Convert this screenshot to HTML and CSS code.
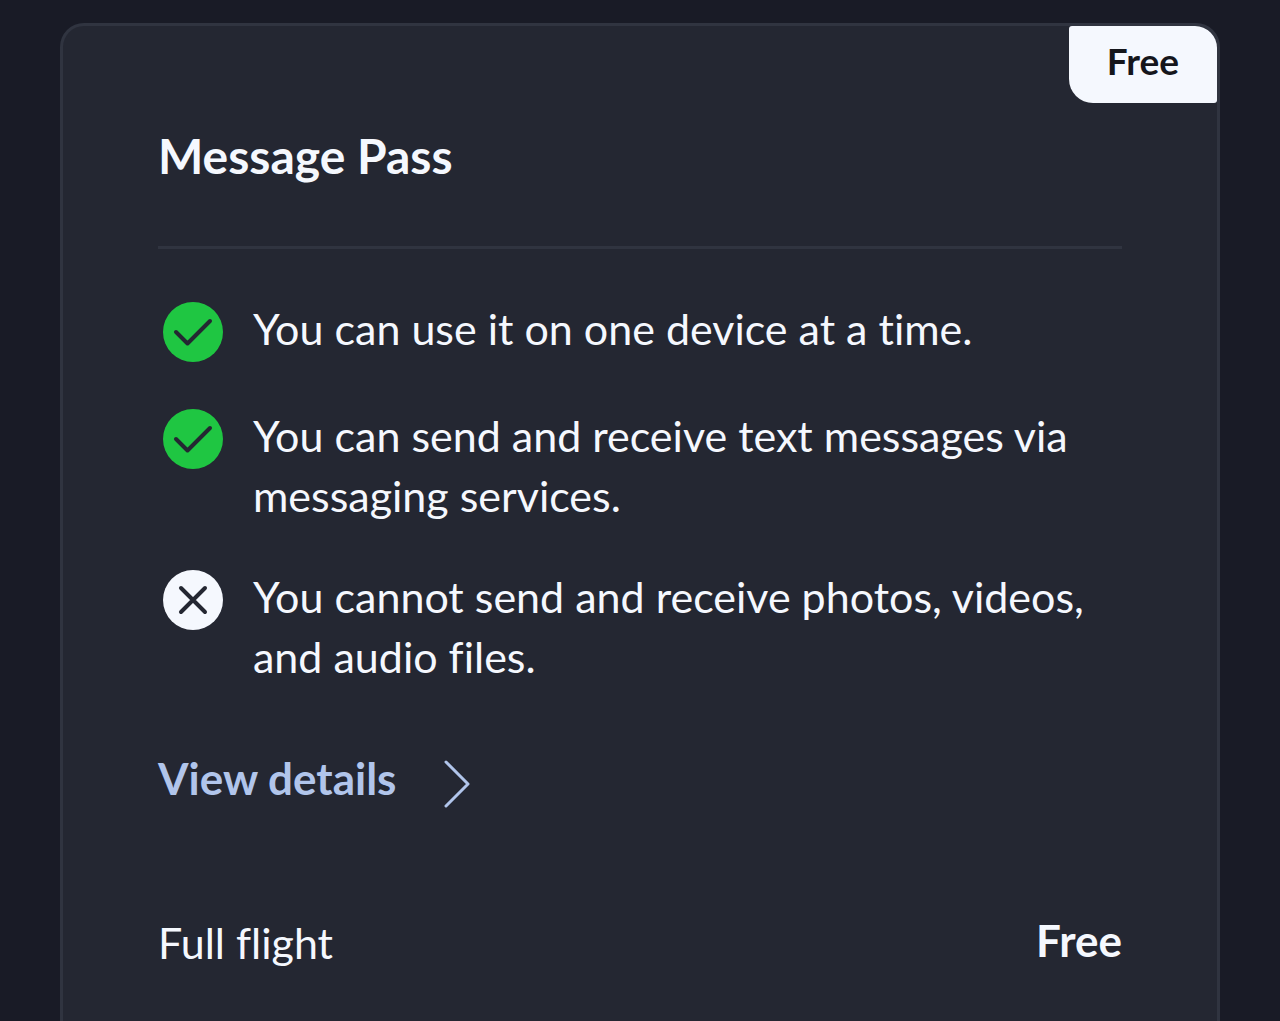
FILE: index.html
```html
<!DOCTYPE html>
<html lang="en">
<head>
    <meta charset="UTF-8">
    <meta name="viewport" content="width=device-width, initial-scale=1.0">
    <title>Message Pass</title>
    <link rel="stylesheet" href="styles.css">
</head>
<body>
    <main class="card">
        <span class="badge">Free</span>
        <h1>Message Pass</h1>
        <ul class="features">
            <li>
                <svg class="icon" viewBox="0 0 60 60" aria-hidden="true">
                    <circle class="yes" cx="30" cy="30" r="30"/>
                    <path class="mark" d="M13 30 L24.5 41.5 L47 19"/>
                </svg>
                <span>You can use it on one device at a time.</span>
            </li>
            <li>
                <svg class="icon" viewBox="0 0 60 60" aria-hidden="true">
                    <circle class="yes" cx="30" cy="30" r="30"/>
                    <path class="mark" d="M13 30 L24.5 41.5 L47 19"/>
                </svg>
                <span>You can send and receive text messages via messaging services.</span>
            </li>
            <li>
                <svg class="icon" viewBox="0 0 60 60" aria-hidden="true">
                    <circle class="no" cx="30" cy="30" r="30"/>
                    <path class="mark" d="M18 18 L42 42 M42 18 L18 42"/>
                </svg>
                <span>You cannot send and receive photos, videos, and audio files.</span>
            </li>
        </ul>
        <a class="details" href="#">
            View details
            <svg class="chevron" viewBox="0 0 26 48" aria-hidden="true">
                <path d="M2 2 L24 24 L2 46"/>
            </svg>
        </a>
        <div class="price">
            <span>Full flight</span>
            <strong>Free</strong>
        </div>
    </main>
</body>
</html>
```

FILE: styles.css
```css
* {
    box-sizing: border-box;
}

body {
    font-family: Lato, sans-serif;
    font-size: 43px;
    font-variant-ligatures: none;
    line-height: 60px;
    background-color: #191b26;
    color: #f5f8fe;
    margin: 0;
    padding: 23px 60px 0;
    display: flex;
    min-height: 100vh;
}

.card {
    position: relative;
    flex: 1;
    background-color: #242732;
    border: 3px solid #303440;
    border-bottom: none;
    border-radius: 24px 24px 0 0;
    padding: 100px 95px 48px;
}

.badge {
    position: absolute;
    top: 0;
    right: 0;
    background-color: #f5f8fe;
    color: #15161c;
    font-size: 37px;
    font-weight: bold;
    line-height: 70px;
    padding: 0 38px 7px;
    border-radius: 3px 22px 3px 24px;
}

h1 {
    font-size: 48px;
    font-weight: bold;
    margin: 0;
    padding-bottom: 60px;
    border-bottom: 3px solid #303440;
}

.features {
    list-style: none;
    margin: 0;
    padding: 50px 0 0;
}

.features li {
    display: flex;
    align-items: flex-start;
    gap: 30px;
    padding-left: 5px;
    margin-bottom: 41px;
}

.icon {
    flex: none;
    width: 60px;
    height: 60px;
    margin: 3px 0;
}

.yes {
    fill: #1fc642;
}

.no {
    fill: #f5f8fe;
}

.mark {
    fill: none;
    stroke: #242732;
    stroke-width: 4;
    stroke-linecap: round;
    stroke-linejoin: round;
}

.details {
    display: inline-flex;
    align-items: flex-end;
    gap: 48px;
    margin-top: 20px;
    color: #b1c5eb;
    font-size: 44px;
    font-weight: bold;
    text-decoration: none;
}

.chevron {
    width: 26px;
    height: 48px;
}

.chevron path {
    fill: none;
    stroke: currentColor;
    stroke-width: 3;
    stroke-linecap: round;
    stroke-linejoin: round;
}

.price {
    display: flex;
    justify-content: space-between;
    align-items: flex-start;
    margin-top: 104px;
}

.price strong {
    font-size: 44px;
    font-weight: bold;
    line-height: 54px;
}
```
